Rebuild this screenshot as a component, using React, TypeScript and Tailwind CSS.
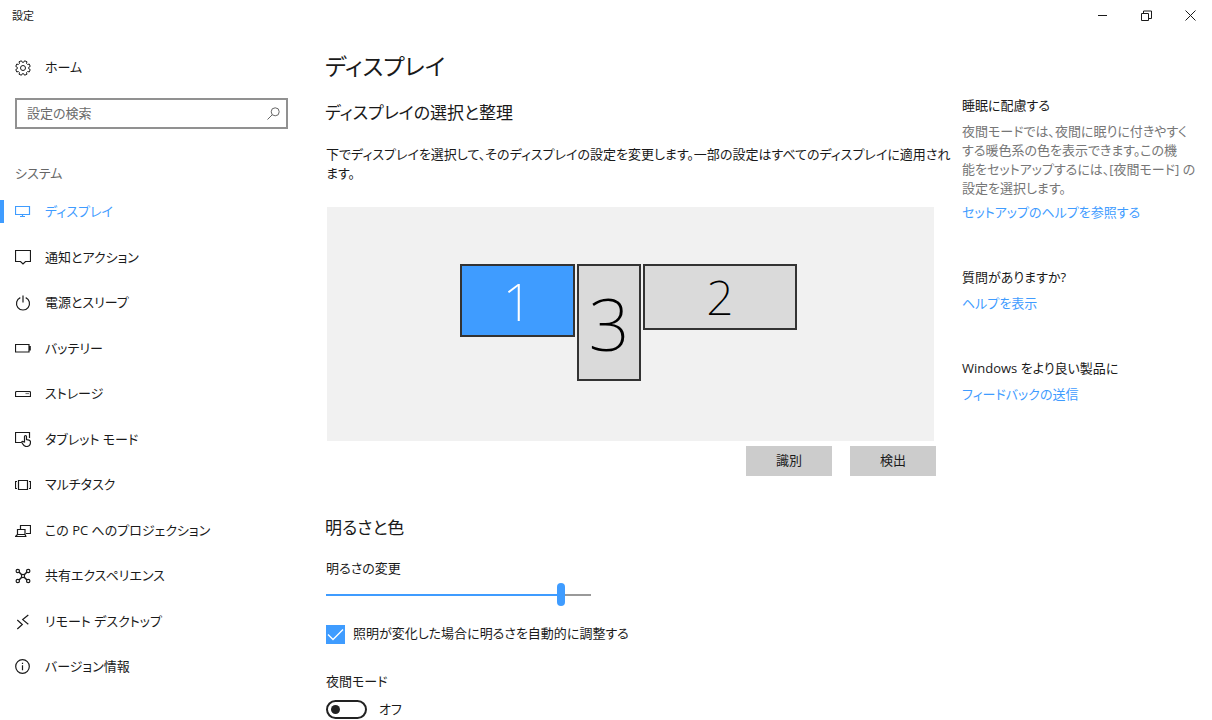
import { useState } from 'react'
import type { ReactNode } from 'react'

const gearPath = (() => {
  const points: string[] = []
  for (let i = 0; i < 8; i++) {
    const mid = i * 45 + 22.5
    const corners = [
      [5.8, -15],
      [7.4, -10],
      [7.4, 10],
      [5.8, 15],
    ]
    corners.forEach(([r, offset]) => {
      const a = ((mid + offset) * Math.PI) / 180
      points.push(`${(8 + r * Math.cos(a)).toFixed(2)} ${(8 + r * Math.sin(a)).toFixed(2)}`)
    })
  }
  return `M${points.join('L')}Z`
})()

function Icon({ children }: { children: ReactNode }) {
  return (
    <svg
      viewBox="0 0 16 16"
      className="size-4 shrink-0"
      fill="none"
      stroke="currentColor"
      strokeWidth="1.2"
      aria-hidden="true"
    >
      {children}
    </svg>
  )
}

const navItems = [
  {
    label: 'ディスプレイ',
    icon: <path d="M.5 2.5h14v8H.5zM7.5 10.5v2M5 12.5h5" />,
  },
  {
    label: '通知とアクション',
    icon: <path d="M.5 1.5h15v11H10.5L8 15 5.5 12.5H.5z" />,
  },
  {
    label: '電源とスリープ',
    icon: <path d="M8 .5v7M5.3 2.6a6.5 6.5 0 1 0 5.4 0" />,
  },
  {
    label: 'バッテリー',
    icon: <path d="M.5 4.5h13.5v7.5H.5zM14 6.5h1.2v3.5H14" />,
  },
  {
    label: 'ストレージ',
    icon: (
      <>
        <path d="M1 5.5h14l.5 1v4H.5v-4z" />
        <path d="M10.5 7.5H14" strokeOpacity=".6" />
      </>
    ),
  },
  {
    label: 'タブレット モード',
    icon: (
      <>
        <path d="M6.5 11.5h-6v-10h14V7" />
        <path d="M9.5 11V5.5a1 1 0 0 1 2 0V8.500l2.500.6c1 .3 1.500.8 1.500 1.800 0 2.700-1.500 4.600-4 4.600-2 0-3-1-3.700-2.500L6.800 11.500c-.3-.9.7-1.400 1.400-.8z" />
      </>
    ),
  },
  {
    label: 'マルチタスク',
    icon: <path d="M3.5 3.5h9v9h-9zM2 4.500H.5v7H2M14 4.500h1.500v7H14" />,
  },
  {
    label: 'この PC へのプロジェクション',
    icon: <path d="M5.5 6V2.5h10v8H11M2.5 6.5H10v5H2.5zM0 13.500h11.500M2.500 11.500l-2 2M10 11.500l1 2" />,
  },
  {
    label: '共有エクスペリエンス',
    icon: (
      <>
        <path d="M4 4l3 3M12 4L9 7M4 12l3-3M12 12L9 9" strokeWidth="1.5" />
        <circle cx="2.8" cy="3" r="1.7" />
        <circle cx="13.2" cy="3" r="1.7" />
        <circle cx="2.8" cy="13" r="1.7" />
        <circle cx="13.2" cy="13" r="1.7" />
        <circle cx="8" cy="8" r="1.6" />
      </>
    ),
  },
  {
    label: 'リモート デスクトップ',
    icon: <path d="M2.3 6l5 4.5-5 4.5M13.3 1L7.7 5.6l5.6 4.6" />,
  },
  {
    label: 'バージョン情報',
    icon: (
      <>
        <circle cx="7.5" cy="7.5" r="6.8" />
        <path d="M7.5 6.3v5M7.5 3.7V5" />
      </>
    ),
  },
]

const monitors = [
  { id: 1, box: 'w-[115px] h-[73px] text-[52px]' },
  { id: 3, box: 'w-[64px] h-[117px] text-[72px]' },
  { id: 2, box: 'w-[154px] h-[66px] text-[48px]' },
]

function TitleBar() {
  return (
    <header className="flex h-8 items-center justify-between pl-3 text-[11px]">
      <span>設定</span>
      <div className="flex self-start">
        <button aria-label="最小化" className="flex h-[31px] w-11 items-center justify-center">
          <svg viewBox="0 0 11 11" className="size-[11px]" fill="none" stroke="currentColor">
            <path d="M1 5.5h9" />
          </svg>
        </button>
        <button aria-label="元に戻す" className="flex h-[31px] w-11 items-center justify-center">
          <svg viewBox="0 0 11 11" className="size-[11px]" fill="none" stroke="currentColor">
            <path d="M.5 3.5h7v7h-7z" />
            <path d="M2.5 3V1h8v7.5H8" />
          </svg>
        </button>
        <button aria-label="閉じる" className="flex h-[31px] w-11 items-center justify-center">
          <svg viewBox="0 0 11 11" className="size-[11px]" fill="none" stroke="currentColor">
            <path d="M.5.5l10 10M10.5.5l-10 10" />
          </svg>
        </button>
      </div>
    </header>
  )
}

function Sidebar() {
  const [current, setCurrent] = useState('ディスプレイ')

  return (
    <aside className="w-[325px] shrink-0">
      <a href="#home" className="mt-6 flex h-6 items-center gap-[14px] pl-[15px]">
        <Icon>
          <path d={gearPath} strokeLinejoin="round" strokeWidth="1" />
          <circle cx="8" cy="8" r="2.5" strokeWidth="1" />
        </Icon>
        ホーム
      </a>
      <label className="mt-[18px] mr-[37px] ml-[15px] flex h-[31px] items-center border-2 border-[#919191] px-[6px]">
        <input
          type="text"
          aria-label="設定の検索"
          placeholder="設定の検索"
          className="min-w-0 flex-1 pl-1 outline-none placeholder:text-[#6b6b6b]"
        />
        <svg viewBox="0 0 13 13" className="size-[13px] text-[#666]" fill="none" stroke="currentColor">
          <circle cx="8.2" cy="4.8" r="4" />
          <path d="M5.3 7.7L.5 12.5" />
        </svg>
      </label>
      <h2 className="mt-[33px] h-[22px] pl-[15px] leading-[22px] text-[#666]">システム</h2>
      <nav className="mt-[5px] grid h-[501px] auto-rows-fr">
        {navItems.map(item => (
          <a
            key={item.label}
            href="#settings"
            onClick={() => setCurrent(item.label)}
            className={item.label === current ? 'flex items-center text-[#3f9cff]' : 'flex items-center'}
          >
            <span className={item.label === current ? 'mr-[11px] h-[23px] w-1 bg-[#3f9cff]' : 'mr-[11px] w-1'} />
            <Icon>{item.icon}</Icon>
            <span className="ml-[14px]">{item.label}</span>
          </a>
        ))}
      </nav>
    </aside>
  )
}

function DisplaySettings() {
  const [selected, setSelected] = useState(1)
  const [brightness, setBrightness] = useState(90)
  const [auto, setAuto] = useState(true)
  const [nightMode, setNightMode] = useState(false)

  return (
    <main className="min-w-0 flex-1">
      <h1 className="mt-4 h-9 text-[23px] leading-9">ディスプレイ</h1>
      <h2 className="mt-[15px] h-7 text-[17px] leading-7">ディスプレイの選択と整理</h2>
      <p className="mt-[18px] ml-px leading-[19px] whitespace-nowrap">
        下でディスプレイを選択して、そのディスプレイの設定を変更します。一部の設定はすべてのディスプレイに適用され
        <br />
        ます。
      </p>
      <div className="mt-6 mr-px ml-[2px] flex h-[234px] items-start justify-center gap-[2px] bg-[#f1f1f1] pt-[57px] pr-1">
        {monitors.map(monitor => (
          <button
            key={monitor.id}
            onClick={() => setSelected(monitor.id)}
            className={`${monitor.box} flex items-center justify-center border-2 border-[#333] font-['Noto_Sans','Open_Sans',sans-serif] leading-none font-extralight ${
              selected === monitor.id ? 'bg-[#3f9cff] text-white' : 'bg-[#dadada] text-black'
            }`}
          >
            {monitor.id}
          </button>
        ))}
      </div>
      <div className="-mr-px mt-[5px] flex justify-end gap-[18px]">
        <button className="h-[30px] w-[86px] bg-[#ccc]">識別</button>
        <button className="h-[30px] w-[86px] bg-[#ccc]">検出</button>
      </div>

      <h2 className="mt-[38px] h-7 text-[17px] leading-7">明るさと色</h2>
      <label htmlFor="brightness" className="mt-[15px] ml-px block h-[22px] leading-[22px]">
        明るさの変更
      </label>
      <input
        id="brightness"
        type="range"
        min="0"
        max="100"
        value={brightness}
        onChange={e => setBrightness(Number(e.target.value))}
        style={{ backgroundSize: `${brightness}% 2px, 100% 2px` }}
        className="mt-1 ml-px block h-[23px] w-[265px] appearance-none bg-[linear-gradient(#3f9cff,#3f9cff),linear-gradient(#999,#999)] bg-left bg-no-repeat [&::-webkit-slider-thumb]:h-[23px] [&::-webkit-slider-thumb]:w-2 [&::-webkit-slider-thumb]:appearance-none [&::-webkit-slider-thumb]:rounded-full [&::-webkit-slider-thumb]:bg-[#3f9cff]"
      />
      <label className="mt-4 ml-px flex h-6 items-center gap-2">
        <span className="grid size-[19px]">
          <input
            type="checkbox"
            checked={auto}
            onChange={e => setAuto(e.target.checked)}
            className="col-start-1 row-start-1 size-[19px] appearance-none border-2 border-[#333] checked:border-[#3f9cff] checked:bg-[#3f9cff]"
          />
          {auto && (
            <svg
              viewBox="0 0 19 19"
              className="pointer-events-none col-start-1 row-start-1 size-[19px]"
              fill="none"
              stroke="#fff"
              strokeWidth="1.3"
            >
              <path d="M2 9.5l5 5L17 4.5" />
            </svg>
          )}
        </span>
        照明が変化した場合に明るさを自動的に調整する
      </label>
      <h3 className="mt-6 ml-px h-[22px] leading-[22px]">夜間モード</h3>
      <label className="mt-2 ml-px flex h-[19px] items-center gap-3">
        <input
          type="checkbox"
          role="switch"
          aria-label="夜間モード"
          checked={nightMode}
          onChange={e => setNightMode(e.target.checked)}
          className="h-[19px] w-[41px] appearance-none rounded-full border-2 border-[#222] px-[3px] py-[3px] before:block before:size-[9px] before:rounded-full before:bg-[#222] checked:border-[#3f9cff] checked:bg-[#3f9cff] checked:before:ml-auto checked:before:bg-white"
        />
        {nightMode ? 'オン' : 'オフ'}
      </label>
    </main>
  )
}

function HelpPanel() {
  return (
    <aside className="w-[277px] shrink-0 pt-[62px] pr-2 pl-[27px]">
      <section>
        <h3 className="h-[22px] leading-[22px]">睡眠に配慮する</h3>
        <p className="mt-[6px] leading-[19px] text-[#767676]">
          夜間モードでは、夜間に眠りに付きやすく
          <br />
          する暖色系の色を表示できます。この機
          <br />
          能をセットアップするには、[夜間モード] の
          <br />
          設定を選択します。
        </p>
        <a href="#setup-help" className="mt-[3px] block h-[22px] leading-[22px] text-[#3f9cff]">
          セットアップのヘルプを参照する
        </a>
      </section>
      <section className="mt-[43px]">
        <h3 className="h-[22px] leading-[22px]">質問がありますか?</h3>
        <a href="#help" className="mt-1 block h-[22px] leading-[22px] text-[#3f9cff]">
          ヘルプを表示
        </a>
      </section>
      <section className="mt-[43px]">
        <h3 className="h-[22px] leading-[22px]">Windows をより良い製品に</h3>
        <a href="#feedback" className="mt-1 block h-[22px] leading-[22px] text-[#3f9cff]">
          フィードバックの送信
        </a>
      </section>
    </aside>
  )
}

export default function App() {
  return (
    <div
      lang="ja"
      className="bg-white font-['Open_Sans','Noto_Sans_CJK_JP',sans-serif] text-[13px] text-[#1a1a1a] [font-feature-settings:'palt']"
    >
      <TitleBar />
      <div className="flex">
        <Sidebar />
        <DisplaySettings />
        <HelpPanel />
      </div>
    </div>
  )
}
